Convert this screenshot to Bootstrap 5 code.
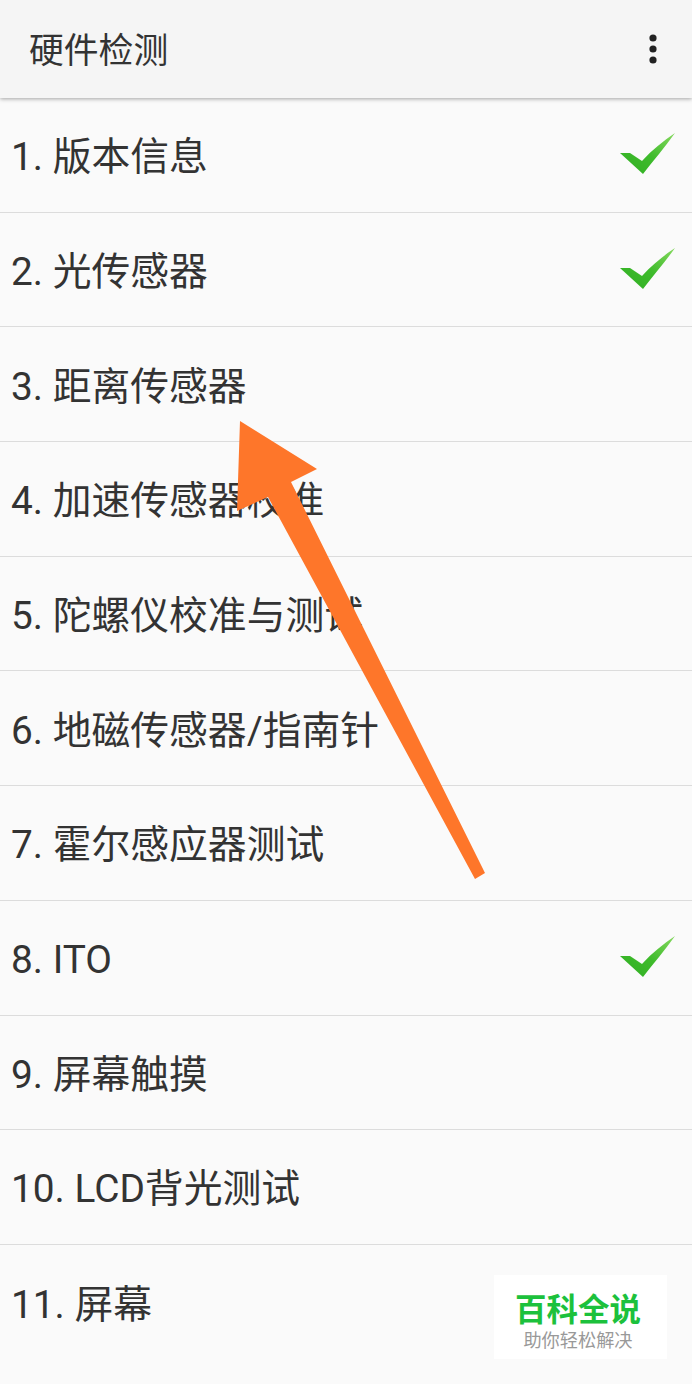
<!DOCTYPE html>
<html lang="zh-CN">
<head>
  <meta charset="UTF-8">
  <title>硬件检测</title>
  <link href="https://cdn.jsdelivr.net/npm/bootstrap@5.3.2/dist/css/bootstrap.min.css" rel="stylesheet">
  <style>
    body {
      background-color: #fafafa;
      font-family: Roboto, "Noto Sans CJK SC", sans-serif;
      color: #333;
      height: 1384px;
      overflow: hidden;
    }
    .app-bar {
      height: 98px;
      background: #f5f5f5;
      box-shadow: 0 1px 4px rgba(0,0,0,.35);
      padding: 0 34px 0 29px;
      font-size: 34.8px;
      position: relative;
      z-index: 1;
    }
    .app-bar span {
      padding-top: 5px;
    }
    .test-list {
      background: transparent;
    }
    .test-row {
      height: 114.7px;
      padding: 0 16px 0 11px;
      background: transparent;
      border-color: #dcdcdc;
      border-width: 0 0 2px;
      font-size: 38.8px;
      color: #333;
    }
    .test-row span {
      padding-top: 5px;
    }
    .tick-icon {
      filter: blur(.5px);
    }
    .arrow-over {
      position: absolute;
      left: 0;
      top: 0;
      pointer-events: none;
    }
    .stamp {
      position: absolute;
      left: 494px;
      top: 1275px;
      width: 173px;
      height: 84px;
      background: #fff;
      text-align: center;
      padding: 17px 5px 0 0;
    }
    .stamp-big {
      font-size: 31.5px;
      font-weight: 700;
      line-height: 1.2;
      color: #1cc13c;
    }
    .stamp-small {
      font-size: 18.2px;
      line-height: 1.2;
      color: #999;
    }
  </style>
</head>
<body>
<svg width="0" height="0" class="d-block">
  <defs>
    <linearGradient id="checkGreen" x1="0" y1="1" x2="1" y2="0">
      <stop offset="0" stop-color="#2fae22"/>
      <stop offset="0.5" stop-color="#3fbb2c"/>
      <stop offset="1" stop-color="#86d95f"/>
    </linearGradient>
    <symbol id="tick" viewBox="0 0 56 44">
      <path d="M0 20 L10 20 L22 28 C32 17 43 8 55 0 C45 14 33 28 23 41 Z" fill="url(#checkGreen)"/>
    </symbol>
  </defs>
</svg>

<div class="app-bar d-flex align-items-center justify-content-between">
  <span>硬件检测</span>
  <svg width="10" height="32" viewBox="0 0 10 32">
    <circle cx="5" cy="5" r="3.6" fill="#222"/>
    <circle cx="5" cy="16" r="3.6" fill="#222"/>
    <circle cx="5" cy="27" r="3.6" fill="#222"/>
  </svg>
</div>

<div class="list-group list-group-flush test-list">
  <div class="list-group-item test-row d-flex align-items-center justify-content-between">
    <span>1. 版本信息</span>
    <svg class="tick-icon" width="56" height="44"><use href="#tick"/></svg>
  </div>
  <div class="list-group-item test-row d-flex align-items-center justify-content-between">
    <span>2. 光传感器</span>
    <svg class="tick-icon" width="56" height="44"><use href="#tick"/></svg>
  </div>
  <div class="list-group-item test-row d-flex align-items-center"><span>3. 距离传感器</span></div>
  <div class="list-group-item test-row d-flex align-items-center"><span>4. 加速传感器校准</span></div>
  <div class="list-group-item test-row d-flex align-items-center"><span>5. 陀螺仪校准与测试</span></div>
  <div class="list-group-item test-row d-flex align-items-center"><span>6. 地磁传感器/指南针</span></div>
  <div class="list-group-item test-row d-flex align-items-center"><span>7. 霍尔感应器测试</span></div>
  <div class="list-group-item test-row d-flex align-items-center justify-content-between">
    <span>8. ITO</span>
    <svg class="tick-icon" width="56" height="44"><use href="#tick"/></svg>
  </div>
  <div class="list-group-item test-row d-flex align-items-center"><span>9. 屏幕触摸</span></div>
  <div class="list-group-item test-row d-flex align-items-center"><span>10. LCD背光测试</span></div>
  <div class="list-group-item test-row d-flex align-items-center"><span>11. 屏幕</span></div>
</div>

<!-- annotation arrow on top of the list -->
<svg class="arrow-over" width="692" height="1384" viewBox="0 0 692 1384">
  <polygon points="240,421 317,469 291,482 485,873 475,879 268,497 237,511" fill="#fe762a"/>
</svg>

<div class="stamp">
  <div class="stamp-big">百科全说</div>
  <div class="stamp-small">助你轻松解决</div>
</div>

<script src="https://cdn.jsdelivr.net/npm/bootstrap@5.3.2/dist/js/bootstrap.bundle.min.js"></script>
</body>
</html>
